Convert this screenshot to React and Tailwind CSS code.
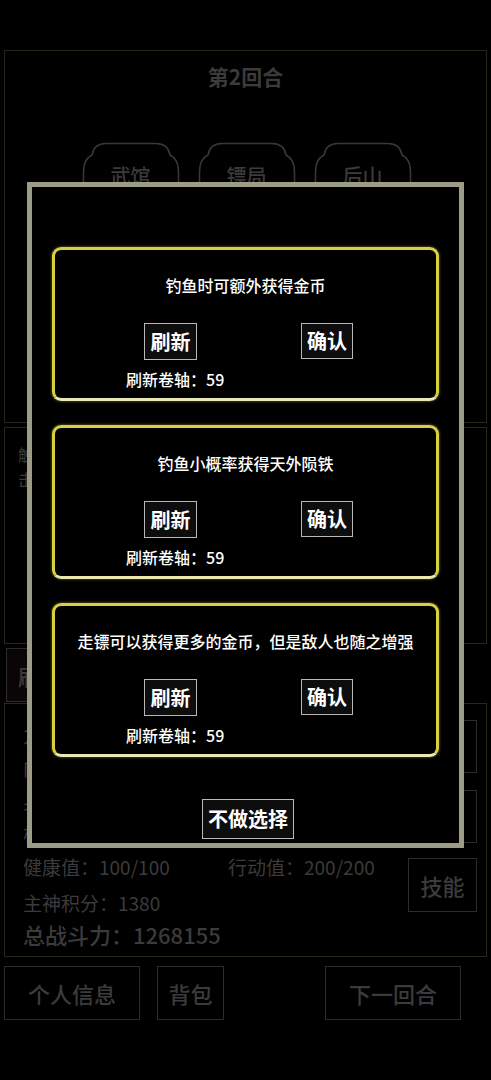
import React from 'react';

const dim = 'text-[#3b3b3b]';

// tab outline drawn behind the 武馆 / 镖局 / 后山 labels
const TabShape = () => (
  <svg className="absolute inset-0" width="98" height="60" viewBox="0 0 98 60" fill="none">
    <path
      d="M1.5 60 L1.5 30 Q1.5 17 10 13 Q12 1.5 24 1.5 L74 1.5 Q86 1.5 88 13 Q96.5 17 96.5 30 L96.5 60"
      stroke="#383838"
      strokeWidth="1.5"
    />
  </svg>
);

const Tab = ({ label }) => (
  <div className="relative w-[98px] h-[60px] flex justify-center pt-[21px]">
    <TabShape />
    <span className={`relative text-[20px] leading-[26px] font-medium ${dim}`}>{label}</span>
  </div>
);

const DimButton = ({ children, className = '' }) => (
  <div className={`border border-[#2c2c2c] flex items-center justify-center text-[22px] font-medium ${dim} ${className}`}>
    {children}
  </div>
);

const ModalButton = ({ children, className = '' }) => (
  <div className={`border border-[#b8b8b8] bg-[#0d0d0d] flex items-center justify-center text-[20px] font-bold leading-none text-white ${className}`}>
    {children}
  </div>
);

const talents = [
  { id: 1, text: '钓鱼时可额外获得金币' },
  { id: 2, text: '钓鱼小概率获得天外陨铁' },
  { id: 3, text: '走镖可以获得更多的金币，但是敌人也随之增强' },
];

const TalentCard = ({ text, scrolls }) => (
  <div className="h-[154px] rounded-[9px] border-[3px] border-[#d8d13f] border-b-[#e9e7b2] shadow-[0_0_3px_rgba(225,215,90,0.55)] mb-[24px] flex flex-col">
    <p className="mt-[24px] text-center text-[16px] leading-[22px] font-medium text-white">{text}</p>
    <div className="mt-[27px] flex pl-[89px]">
      <ModalButton className="w-[53px] h-[37px]">刷新</ModalButton>
      <ModalButton className="ml-[104px] w-[52px] h-[36px]">确认</ModalButton>
    </div>
    <p className="mt-[8px] pl-[71px] text-[16px] leading-[22px] font-medium text-white">刷新卷轴：{scrolls}</p>
  </div>
);

export default function App() {
  return (
    <div className="relative w-[491px] h-[1080px] bg-black overflow-hidden font-['Noto_Sans_CJK_SC','Noto_Sans',sans-serif]">
      {/* game screen, dimmed behind the popup */}
      <div className="px-[4px] pt-[50px]">
        <div className="h-[373px] border border-[#29261a] flex flex-col items-center">
          <h2 className={`mt-[12px] text-[21px] leading-[26px] font-bold ${dim}`}>第2回合</h2>
          <div className="mt-[53px] ml-[2px] flex gap-[18px]">
            <Tab label="武馆" />
            <Tab label="镖局" />
            <Tab label="后山" />
          </div>
        </div>

        <div className="mt-[4px] h-[217px] border border-[#29261a] pl-[13px] pt-[14px]">
          <p className={`text-[16px] leading-[25px] ${dim}`}>触发奇遇事件</p>
          <p className={`text-[16px] leading-[25px] ${dim}`}>击败敌人获得奖励</p>
        </div>

        <div className="mt-[4px] h-[54px] flex">
          <DimButton className="ml-[2px] w-[120px] h-[54px] !justify-start px-[11px] bg-[#0a0606]">刷新</DimButton>
        </div>

        <div className="mt-[1px] h-[254px] border border-[#29261a] flex">
          <div className="flex-1 pl-[18px] pt-[14px]">
            <p className={`text-[19px] leading-[33px] ${dim}`}>力量：100</p>
            <p className={`text-[19px] leading-[33px] ${dim}`}>内功：100</p>
            <p className={`text-[19px] leading-[33px] ${dim}`}>身法：100</p>
            <p className={`text-[19px] leading-[33px] ${dim}`}>根骨：100</p>
            <div className={`flex text-[19px] leading-[33px] ${dim}`}>
              <span className="w-[205px]">健康值：100/100</span>
              <span>行动值：200/200</span>
            </div>
            <p className={`mt-[3px] text-[19px] leading-[33px] ${dim}`}>主神积分：1380</p>
            <p className={`text-[22px] leading-[30px] font-medium ${dim}`}>总战斗力：1268155</p>
          </div>
          <div className="w-[69px] mr-[9px] pt-[16px] flex flex-col">
            <DimButton className="h-[53px]">装备</DimButton>
            <DimButton className="mt-[17px] h-[53px]">功法</DimButton>
            <DimButton className="mt-[15px] h-[54px]">技能</DimButton>
          </div>
        </div>

        <div className="mt-[9px] flex">
          <DimButton className="w-[136px] h-[54px]">个人信息</DimButton>
          <DimButton className="ml-[17px] w-[67px] h-[54px]">背包</DimButton>
          <DimButton className="ml-[101px] w-[136px] h-[54px]">下一回合</DimButton>
        </div>
      </div>

      {/* talent choice popup */}
      <div className="absolute left-[27px] top-[182px] w-[437px] h-[666px] border-[5px] border-[#9c9c87] bg-black px-[20px] pt-[60px]">
        {talents.map((t) => (
          <TalentCard key={t.id} text={t.text} scrolls={59} />
        ))}
        <ModalButton className="mt-[42px] ml-[150px] w-[92px] h-[40px]">不做选择</ModalButton>
      </div>
    </div>
  );
}
